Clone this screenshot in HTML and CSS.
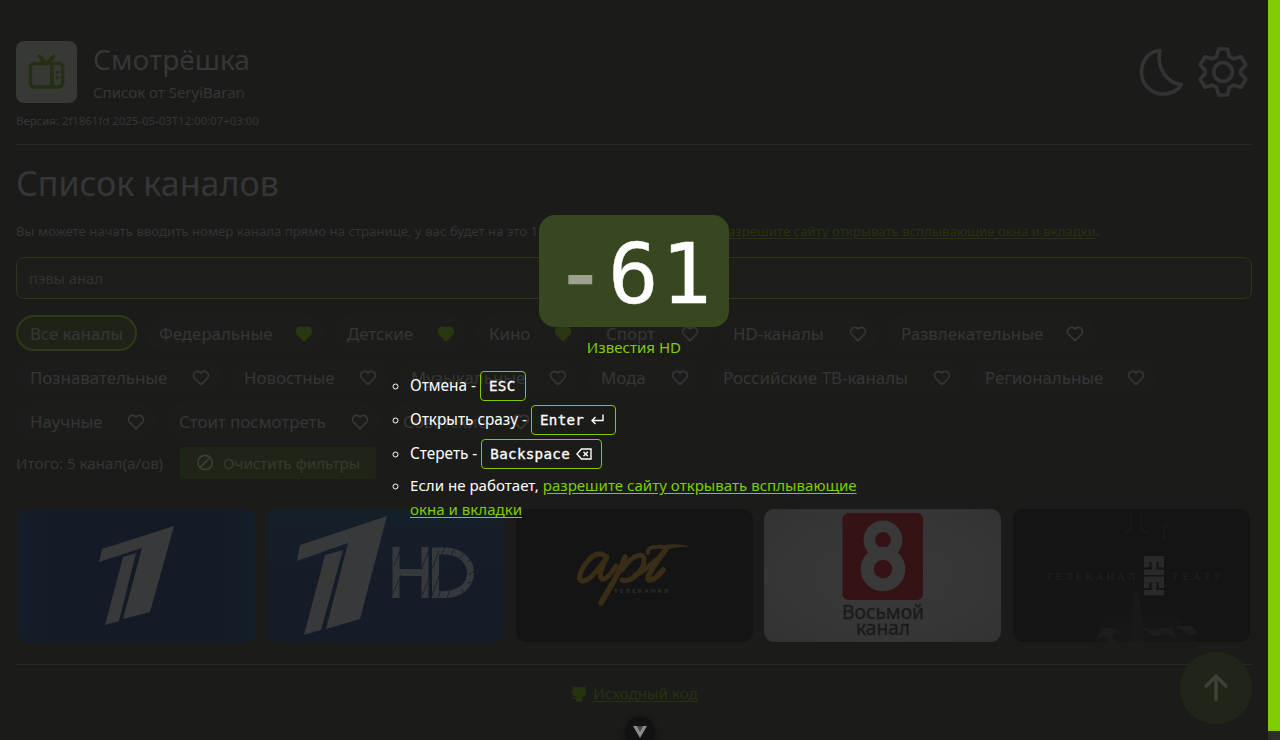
FILE: index.html
```html
<!DOCTYPE html>
<html lang="ru">
<head>
<meta charset="utf-8">
<title>Смотрёшка</title>
<link rel="stylesheet" href="styles.css">
</head>
<body>
<svg class="defs" width="0" height="0">
  <symbol id="heart" viewBox="0 0 24 24"><path d="M19.5 12.57 12 20l-7.5-7.43A5 5 0 1 1 12 6.01a5 5 0 1 1 7.5 6.57z" stroke-width="2" stroke-linejoin="round" stroke-linecap="round"/></symbol>
</svg>
<main class="page">
  <header class="header">
    <div class="brand">
      <div class="logo"><svg width="43" height="43" viewBox="0 0 24 24" fill="none" stroke="#252f13" stroke-width="2" stroke-linecap="round" stroke-linejoin="round"><path d="M3 9a2 2 0 0 1 2-2h14a2 2 0 0 1 2 2v9a2 2 0 0 1-2 2H5a2 2 0 0 1-2-2zM16 3l-4 4-4-4M15 7v13M18 15v.01M18 12v.01"/></svg></div>
      <div class="names"><div class="title">Смотрёшка</div><div class="subtitle">Список от SeryiBaran</div></div>
    </div>
    <div class="tools">
      <svg width="60" height="62" viewBox="0 0 60 62" fill="none" stroke="#333335" stroke-width="3.600" stroke-linecap="round" stroke-linejoin="round"><path d="M29 9.500C17 10 10.500 20.500 10.500 31.500A21.500 21.500 0 0 0 32 53c8.500 0 15-3.500 18.500-9.500C37 42.500 25 28 29 9.500z"/></svg>
      <svg width="62" height="62" viewBox="0 0 62 62" fill="none" stroke="#333335" stroke-width="3.700" stroke-linejoin="round"><circle cx="31" cy="31" r="9.300"/><path d="M26.500 8h9l1.800 7.500 4.200 2.400 7.500-2.100 5 8-5.300 5.700v3l5.300 5.700-5 8-7.500-2.100-4.200 2.400-1.800 7.500h-9l-1.800-7.500-4.200-2.400-7.500 2.100-5-8 5.300-5.700v-3l-5.300-5.700 5-8 7.500 2.100 4.200-2.400z"/></svg>
    </div>
  </header>
  <div class="version">Версия: 2f1861fd 2025-05-03T12:00:07+03:00</div>
  <hr class="rule">
  <h1>Список каналов</h1>
  <p class="hint"><span class="hint-text">Вы можете начать вводить номер канала прямо на странице, у вас будет на это 1 секунда.</span><a>разрешите сайту открывать всплывающие окна и вкладки</a>.</p>
  <div class="search">пэвы анал</div>
  <div class="chips">
    <div class="chip w121 all">Все каналы</div>
    <div class="chip w180">Федеральные<svg class="heart on"><use href="#heart"/></svg></div>
    <div class="chip w134">Детские<svg class="heart on"><use href="#heart"/></svg></div>
    <div class="chip w109">Кино<svg class="heart on"><use href="#heart"/></svg></div>
    <div class="chip w119">Спорт<svg class="heart"><use href="#heart"/></svg></div>
    <div class="chip w160">HD-каналы<svg class="heart"><use href="#heart"/></svg></div>
    <div class="chip w209">Развлекательные<svg class="heart"><use href="#heart"/></svg></div>
  </div>
  <div class="chips">
    <div class="chip w206">Познавательные<svg class="heart"><use href="#heart"/></svg></div>
    <div class="chip w159">Новостные<svg class="heart"><use href="#heart"/></svg></div>
    <div class="chip w182">Музыкальные<svg class="heart"><use href="#heart"/></svg></div>
    <div class="chip w114">Мода<svg class="heart"><use href="#heart"/></svg></div>
    <div class="chip w254">Российские ТВ-каналы<svg class="heart"><use href="#heart"/></svg></div>
    <div class="chip w186">Региональные<svg class="heart"><use href="#heart"/></svg></div>
  </div>
  <div class="chips">
    <div class="chip w141">Научные<svg class="heart"><use href="#heart"/></svg></div>
    <div class="chip w216">Стоит посмотреть<svg class="heart"><use href="#heart"/></svg></div>
    <div class="chip w153">Советские<svg class="heart"><use href="#heart"/></svg></div>
  </div>
  <div class="summary">
    <span class="total">Итого: 5 канал(а/ов)</span>
    <span class="clear"><svg width="20" height="20" viewBox="0 0 20 20" fill="none" stroke="#3a3f36" stroke-width="1.700"><circle cx="10" cy="9.500" r="7.200"/><path d="M5 14.500 15 4.500"/></svg>Очистить фильтры</span>
  </div>
  <div class="cards">
    <div class="card blue"><svg viewBox="0 0 237 133"><g fill="#38393a"><path d="M84 40 156 17 132 103 105 110 124 39 81 53z"/><path d="M105 48 118 44 101 112 87 116z"/></g></svg></div>
    <div class="card teal"><svg viewBox="0 0 237 133"><g fill="#38393a"><path d="M33 36 120 7 93 110 59 120 81 34 30 52z"/><path d="M58 46 76 41 54 121 37 126z"/></g><g fill="none" stroke="#36393c" stroke-width="7"><path d="M129 38v51M129 63.500h29M158 38v51"/><path d="M168.500 42h11c32 2 32 42 0 43.500h-11zV89"/></g><g stroke="#151c27" stroke-width=".8"><path d="m127 57 7-18M126 84l8-18M154 61l9-22M155 87l8-20M165 60l7-18M165 87l7-20M174 47l4-9M184 47l4-9M193 49l7-8M200 53l8-5M202 66l9-7M201 74l10-2M194 80l5 7M183 81l-3 8M174 81l-3 8"/></g></svg></div>
    <div class="card black"><svg viewBox="0 0 237 133"><g fill="none" stroke="#3a2d18" stroke-linecap="round" stroke-linejoin="round"><path d="M90 48c-5-6-13-3-19 5-7 9-10 18-5 19 7 1 17-12 25-24-5 10-9 20-5 22 4 1 9-5 14-13" stroke-width="5"/><path d="M109 48c-5 16-15 30-24 46" stroke-width="5.500"/><path d="M106 61c9-14 21-19 22-11 1 10-12 24-22 21M119 66c6-1 14-9 21-15" stroke-width="5"/><path d="M150 40c-7 9-22 30-17 31 4 1 9-4 14-10" stroke-width="5.500"/><path d="M132 44c-2-6 8-7 20-6" stroke-width="4"/><path d="M150 35.500q14-1 24 2-12 0-24 3z" stroke="none" fill="#3a2d18"/></g><text x="98" y="84" class="art-sub">ТЕЛЕКАНАЛ</text></svg></div>
    <div class="card gray"><svg viewBox="0 0 237 133"><rect x="78.500" y="4" width="80.500" height="87" rx="6" fill="#351315"/><g fill="none" stroke="#39393a"><circle cx="119" cy="31" r="13.700" stroke-width="11.500"/><circle cx="119" cy="60" r="15.800" stroke-width="13"/></g><text x="78" y="110" class="eight" textLength="82" lengthAdjust="spacingAndGlyphs">Восьмой</text><text x="92" y="126" class="eight" textLength="54" lengthAdjust="spacingAndGlyphs">канал</text></svg></div>
    <div class="card dark"><svg viewBox="0 0 237 133"><defs><linearGradient id="fog" x2="0" y2="1"><stop offset="0" stop-color="#1e1c1d" stop-opacity="0"/><stop offset="1" stop-color="#1e1c1d"/></linearGradient></defs><path d="M98 88h50l35 45H82z" fill="url(#fog)" opacity=".45"/><path d="M121 82h5l5 51h-14z" fill="#1a191a"/><path d="M84 129q5-11 13-10l11 4-9 3 3 7h-5l-3-6zM127 117l12 4 20-3 5 13-10-6-14 2zM163 117h16l6 7-8 3z" fill="#1e1d1e"/><path d="M120 4q-5 0-2 9 0 9-6 10M127 3q4 7 0 12 2 8 8 8M151 31V18q3-3 7-2" fill="none" stroke="#1a1a1b" stroke-width="1.500"/><path d="M131 47h20v19h-20zM131 67.500h20v19h-20z" fill="#29292a"/><path d="M131 59.500h6.500V53M151 59.500h-6.500V53M131 80h6.500v-6.500M151 80h-6.500v-6.500" fill="none" stroke="#141414" stroke-width="2.200"/><text x="33" y="70.500" class="theatre" textLength="89">ТЕЛЕКАНАЛ</text><text x="159" y="70.500" class="theatre" textLength="48">ТЕАТР</text></svg></div>
  </div>
  <hr class="rule foot-rule">
  <footer class="footer"><svg width="18" height="18" viewBox="0 0 24 24"><path fill="#263311" d="M4 2.500 8.500 4.300h7L20 2.500l.8 6c2 5-1 8.500-5 9.200l1 5.800H8v-3.500c-4 .8-4.500-2-6.500-3.500 3-.4 3.500 2.500 6 1.500l1-1.500C4 16.500 1.600 13 3.400 8z"/></svg><a>Исходный код</a></footer>
</main>
<div class="to-top"><svg width="40" height="40" viewBox="0 0 40 40" fill="none" stroke="#3c4038" stroke-width="3.600" stroke-linecap="round" stroke-linejoin="round"><path d="M20 32V8M10 18 20 8l10 10"/></svg></div>
<div class="devtools"><svg width="16" height="14" viewBox="0 0 16 14"><path d="M1 1h4l3 5.500L11 1h4L8 13z" fill="#8b8b8b"/><path d="M5 1h2l1 1.500L9 1h2L8 6.500z" fill="#505050"/></svg></div>
<section class="overlay">
  <div class="number"><span class="dash">-</span>61</div>
  <div class="channel">Известия HD</div>
  <ul class="keys">
    <li>Отмена - <kbd>ESC</kbd></li>
    <li>Открыть сразу - <kbd>Enter<svg width="16" height="16" viewBox="0 0 16 16" fill="none" stroke="#fff" stroke-width="1.400"><path d="M13 2.500v6H2M5.500 5 2 8.500 5.500 12"/></svg></kbd></li>
    <li>Стереть - <kbd>Backspace<svg width="16" height="16" viewBox="0 0 16 16" fill="none" stroke="#fff" stroke-width="1.400"><path d="M5.500 3H15v10H5.500L1 8zM7.500 5.800l4.400 4.400M11.900 5.800l-4.400 4.400"/></svg></kbd></li>
    <li class="help">Если не работает, <a>разрешите сайту открывать всплывающие<br>окна и вкладки</a></li>
  </ul>
</section>
<div class="scrollbar"></div>
</body>
</html>
```
FILE: styles.css
```css
*{box-sizing:border-box}
body{margin:0;width:1280px;height:740px;overflow:hidden;position:relative;background:#1b1b19;color:#363637;font:15.2px/24px "Noto Sans",sans-serif}
svg{display:block;flex:none}
.defs{position:absolute}
a{text-decoration:underline;text-underline-offset:2px}
.page{width:1268px;height:740px;padding:41px 16px 0;display:flex;flex-direction:column}
.header{display:flex;justify-content:space-between;height:62px}
.brand{display:flex;gap:16px}
.logo{width:61px;height:62px;border-radius:8px;background:#373a34;display:flex;align-items:center;justify-content:center}
.names{display:flex;flex-direction:column}
.title{font-size:28.15px;line-height:36px;height:38px}
.subtitle{font-size:15px;line-height:26px}
.tools{display:flex;height:62px;gap:1px;margin-right:-2px}
.version{font-size:11.4px;line-height:16px;margin-top:10px}
.rule{width:100%;height:1px;border:0;margin:15px 0 0;background:#282c1e}
h1{margin:16px 0 0;font-size:34.1px;line-height:44px;font-weight:400}
.hint{margin:16px 0 0;font-size:13.2px;line-height:20px;display:flex;color:#343435}
.hint a,.footer a{color:#263311}
.hint-text{width:704px;white-space:nowrap;overflow:hidden}
.search{margin-top:16px;height:42px;border:1px solid #2b3519;border-radius:8px;padding:0 12px;line-height:40px;font-size:14.8px;background:#1d1d1a;color:#333334}
.chips{display:flex;gap:8px;height:36px;margin-top:8px}
.search+.chips{margin-top:16px}
.chip{height:36px;border-radius:18px;background:#1c1d1a;padding:1px 11px 0 14px;display:flex;align-items:center;justify-content:space-between;font-size:16.85px;white-space:nowrap}
.all{border:2px solid #2c3a16;background:#1f2317;padding:1px 12px 0}
.heart{width:20px;height:20px;fill:none;stroke:#363637}
.on{fill:#293712;stroke:#293712}
.w121{width:121px}.w180{width:180px}.w134{width:134px}.w109{width:109px}.w119{width:119px}.w160{width:160px}.w209{width:209px}
.w206{width:206px}.w159{width:159px}.w182{width:182px}.w114{width:114px}.w254{width:254px}.w186{width:186px}
.w141{width:141px}.w216{width:216px}.w153{width:153px}
.summary{display:flex;align-items:center;gap:16px;margin-top:8px;height:32px}
.total{width:148px;white-space:nowrap}
.clear{display:flex;align-items:center;gap:8px;height:32px;width:196px;padding-left:15px;border-radius:3px;background:#1f2516;font-size:15.1px;color:#373a33}
.cards{display:grid;grid-template-columns:repeat(5,237px);justify-content:space-between;padding:0 2px;margin-top:30px}
.card{height:133px;border-radius:10px;overflow:hidden}
.card svg{width:237px;height:133px}
.blue{background:linear-gradient(90deg,#141d2a,#151b26 15%,#151b26 85%,#141d2a)}
.teal{background:linear-gradient(#142029,#151c28 50%,#151b27)}
.black{background:#141414}
.gray{background:radial-gradient(#393939,#373637 60%,#333233)}
.dark{background:#141414}
.art-sub{font:bold 6px "Noto Sans",sans-serif;letter-spacing:2.300px;fill:#303031}
.eight{font:19px "Noto Sans",sans-serif;fill:#1b1b1c;stroke:#1b1b1c;stroke-width:.4px}
.theatre{font:10px "Liberation Serif",serif;fill:#242223}
.foot-rule{margin-top:22px;background:#262821}
.footer{display:flex;justify-content:center;align-items:center;gap:5px;margin-top:16px;height:24px}
.to-top{position:absolute;left:1180px;top:652px;width:72px;height:72px;border-radius:50%;background:#202617;display:flex;align-items:center;justify-content:center}
.devtools{position:absolute;left:625px;top:717px;width:30px;height:30px;border-radius:50%;background:#121212;display:flex;justify-content:center;padding-top:8px;box-shadow:0 0 5px #111}
.scrollbar{position:absolute;right:0;top:0;width:12px;height:740px;background:linear-gradient(#80cc00 731px,#2c2e2a 731px)}
.overlay{position:absolute;left:394px;top:215px;width:480px;color:#fff;display:flex;flex-direction:column;align-items:center}
.number{width:190px;height:112px;border-radius:16px;background:#37471f;font:84px/118px "DejaVu Sans Mono",monospace;letter-spacing:2.400px;padding-left:16px;white-space:nowrap;-webkit-text-stroke:.4px #fff}
.dash{color:#9ba38f;-webkit-text-stroke:2.500px #9ba38f}
.channel{margin-top:8px;color:#80cc00;font-size:15.1px}
.keys{align-self:stretch;list-style:circle;margin:11px 0 0;padding:0 0 0 16px}
.keys li{height:34px;line-height:31px;white-space:nowrap;font-size:15.35px}
.keys .help{line-height:24px;height:48px;font-size:15.08px;padding-top:1px}
.keys a{color:#80cc00}
kbd{display:inline-flex;align-items:center;gap:6px;height:30px;border:1px solid #80cc00;border-radius:4px;padding:0 9px 0 8px;font:14.200px "DejaVu Sans Mono",monospace;letter-spacing:.32px;-webkit-text-stroke:.3px #fff;vertical-align:middle;position:relative;top:-1px}
.subtitle{padding-top:2px}
```
